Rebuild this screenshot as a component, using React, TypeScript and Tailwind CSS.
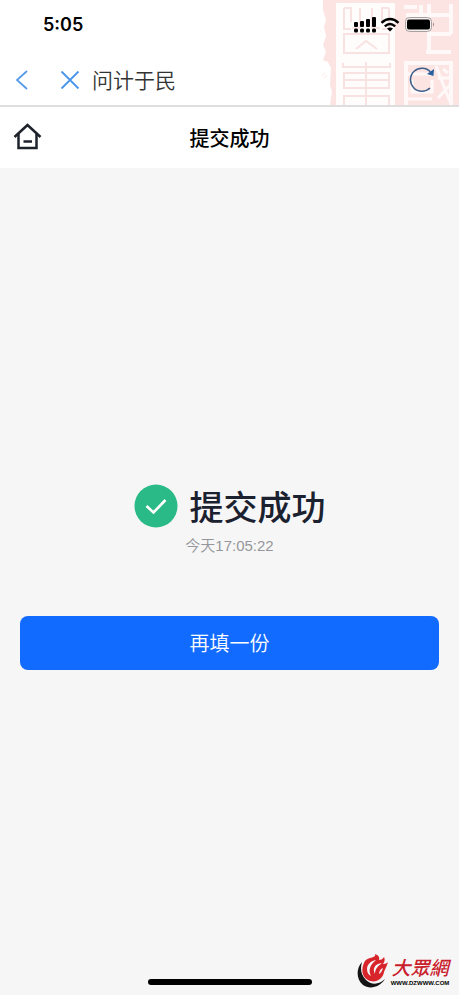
import React from 'react'

const cjk = "font-['Noto_Sans_CJK_SC',sans-serif]"

const SealPattern = () => {
    return (
        <svg
            className="absolute top-0 right-0 h-full w-[145px]"
            viewBox="0 0 145 105"
            preserveAspectRatio="xMaxYMin slice"
            fill="none"
            aria-hidden="true"
        >
            <path
                d="M9 0H145V105H16L17 98L18 92L16 85L17 68L14 62L9 60L12 52L9 45L12 36L10 27L12 20L9 10Z"
                fill="#fce4e3"
            />
            <path d="M10 73l3 3-2 2-3-3zM6 30l2 3" stroke="#fdf0ef" />
            <path d="M22 3H81V105H22Z" fill="#fffcfc" />
            <g stroke="#f9e2e2" strokeWidth="2">
                <path d="M30 8V29H37M30 8H37V22M46 8V28M58 8V28M46 28H38M58 28H66M75 8V29H68M75 8H68V22" />
                <path d="M30 34H75V53H30ZM42 49L52 41L63 49" />
                <path d="M29 63V67H76V63M52 62V105M30 73H75V88H30ZM30 80H75M30 105V96H75V105" />
            </g>
            <g stroke="#fff8f8" strokeWidth="4">
                <path d="M90 7H103M92 15H139M107 5V15M137 4V34M115 4V54M115 34H137M112 52H137" />
                <path d="M92 105V63H137V105" />
            </g>
            <g stroke="#fff8f8" strokeWidth="3">
                <path d="M94 74H120M98 80V92H118V80M94 99H118M122 66L136 102M124 78H136M137 84L124 98M129 69L134 73" />
            </g>
        </svg>
    )
}

const StatusIcons = () => {
    return (
        <svg className="w-[82px] h-5" viewBox="0 0 82 20" aria-hidden="true">
            <g fill="#000">
                <rect x="1" y="7" width="4" height="5" rx="1" />
                <rect x="7" y="6" width="4" height="6" rx="1" />
                <rect x="13" y="4" width="4" height="8" rx="1" />
                <rect x="19" y="2" width="4" height="10" rx="1" />
                <rect x="1" y="13.500" width="4" height="4" rx="1.500" />
                <rect x="7" y="13.500" width="4" height="4" rx="1.500" />
                <rect x="13" y="13.500" width="4" height="4" rx="1.500" />
                <rect x="19" y="13.500" width="4" height="4" rx="1.500" />
            </g>
            <g fill="none" stroke="#000" strokeWidth="2.400">
                <path d="M28.500 7.800Q37 .3 45.500 7.800" />
                <path d="M31.800 11.300Q37 6.500 42.200 11.300" />
            </g>
            <path d="M34 13.500Q37 11.500 40 13.500L37 16.500Z" fill="#000" />
            <rect x="52.500" y="2.500" width="26" height="14" rx="4" fill="#f4eeee" stroke="#a7a0a0" />
            <rect x="54" y="4.500" width="23" height="10" rx="2" fill="#000" />
            <path d="M80 7.500Q82 9.500 80 11.500Z" fill="#8d8686" />
        </svg>
    )
}

const Flame = () => {
    return (
        <svg className="w-8 h-10" viewBox="0 0 32 40" aria-hidden="true">
            <path
                d="M5 11C-1 17 -1 29 6 34C13 39 23 36 28 28C22 34 14 34 9 29C4 24 3 18 5 11Z"
                fill="#151515"
            />
            <path
                d="M7 12C4 18 5 26 11 29C18 33 26 28 27 21C28 18 30 15 31 11C29 13 27 13 26 13C28 10 28 8 27 6C25 9 23 9 22 9C23 6 21 4 18 3C19 6 16 6 13 7C10 8 8 9 7 12Z"
                fill="#d8252c"
            />
            <path
                d="M19 9C13 10 10 14 10 18C10 22 12 24 14 25C11 19 13 14 19 9Z"
                fill="#f7f7f7"
            />
            <path d="M25 12C18 13 15 17 18 23C18 18 21 15 25 12Z" fill="#f7f7f7" />
            <path d="M26 17C23 18 22 21 22 23C24 22 25 20 26 17Z" fill="#f7f7f7" />
        </svg>
    )
}

const Header = () => {
    return (
        <header className="relative border-b-2 border-[#dedede] bg-white">
            <SealPattern />
            <div className="relative flex items-center justify-between h-[50px] pl-[43px] pr-6">
                <time className="font-['Inter',sans-serif] text-lg font-semibold text-black">5:05</time>
                <StatusIcons />
            </div>
            <div className="relative flex items-center h-[55px] pl-3 pr-6">
                <button type="button" aria-label="返回" className="w-[46px] h-10 flex items-center">
                    <svg className="w-5 h-6" viewBox="0 0 20 24" fill="none" stroke="#559be8" strokeWidth="1.800">
                        <path d="M15 5L5 14L15 23" />
                    </svg>
                </button>
                <button type="button" aria-label="关闭" className="w-[34px] h-10 flex items-center">
                    <svg className="w-6 h-6" viewBox="0 0 24 24" fill="none" stroke="#4796ec" strokeWidth="1.800">
                        <path d="M3.500 5.500L20.500 22.500M20.500 5.500L3.500 22.500" />
                    </svg>
                </button>
                <span className="flex-1 pt-0.5 text-[21px] leading-8 font-[350] text-[#333333]">问计于民</span>
                <button type="button" aria-label="刷新" className="h-10 flex items-center">
                    <svg className="w-[26px] h-7" viewBox="0 0 26 28" fill="none">
                        <path
                            d="M21.500 8A11.500 11.500 0 1 0 21 24"
                            stroke="#3f5f8b"
                            strokeWidth="1.500"
                        />
                        <path d="M25 5L24.500 12L18 10Z" fill="#285f9f" />
                    </svg>
                </button>
            </div>
        </header>
    )
}

const TitleBar = () => {
    return (
        <nav className="grid grid-cols-[44px_1fr_44px] items-center h-[61px] bg-white">
            <a href="#" aria-label="首页" className="pl-[13px]">
                <svg className="w-[30px] h-[30px]" viewBox="0 0 30 30" fill="none" stroke="#1d222b" strokeWidth="2.500">
                    <path d="M1.500 14L14.500 2L27.500 14" />
                    <path d="M5.500 11V25H23.500V11M10.500 18.500H19" />
                </svg>
            </a>
            <h1 className="text-center text-[20px] leading-8 font-medium text-black">提交成功</h1>
        </nav>
    )
}

const Result = () => {
    return (
        <main className="flex-1 flex flex-col justify-center px-5 pt-[38px]">
            <div className="flex items-center justify-center gap-3">
                <svg className="w-11 h-11" viewBox="0 0 44 44" fill="none" aria-hidden="true">
                    <circle cx="22" cy="22" r="21.500" fill="#2aba88" />
                    <path d="M12.500 22L19.500 28.500L31.500 16" stroke="#fff" strokeWidth="2.600" />
                </svg>
                <h2 className="text-[34px] leading-[44px] font-medium text-[#1b212f]">提交成功</h2>
            </div>
            <p className="mt-1 text-center font-['Liberation_Sans','Noto_Sans_CJK_SC',sans-serif] text-[15px] leading-7 font-[350] text-[#94969b]">
                今天17:05:22
            </p>
            <button
                type="button"
                className="mt-14 w-full h-[54px] rounded-lg bg-[#126bff] text-[20px] font-[350] text-white"
            >
                再填一份
            </button>
        </main>
    )
}

const Footer = () => {
    return (
        <footer className="grid grid-cols-[1fr_164px_1fr] items-end h-12">
            <span />
            <span className="mb-[10px] h-[6px] rounded-full bg-black" />
            <a href="#" className="flex items-end justify-end pr-[9px] mb-1 gap-px">
                <Flame />
                <span className="flex flex-col items-center w-[60px] pb-1">
                    <span className="font-['Noto_Sans_CJK_TC',sans-serif] text-[19px] leading-6 font-medium italic text-[#c9202b]">
                        大眾網
                    </span>
                    <span className="font-['Liberation_Sans',sans-serif] text-[6px] leading-2 font-bold text-black">
                        WWW.DZWWW.COM
                    </span>
                </span>
            </a>
        </footer>
    )
}

export default function App() {
    return (
        <div className={`min-h-screen flex flex-col bg-[#f6f6f6] ${cjk}`}>
            <Header />
            <TitleBar />
            <Result />
            <Footer />
        </div>
    )
}
